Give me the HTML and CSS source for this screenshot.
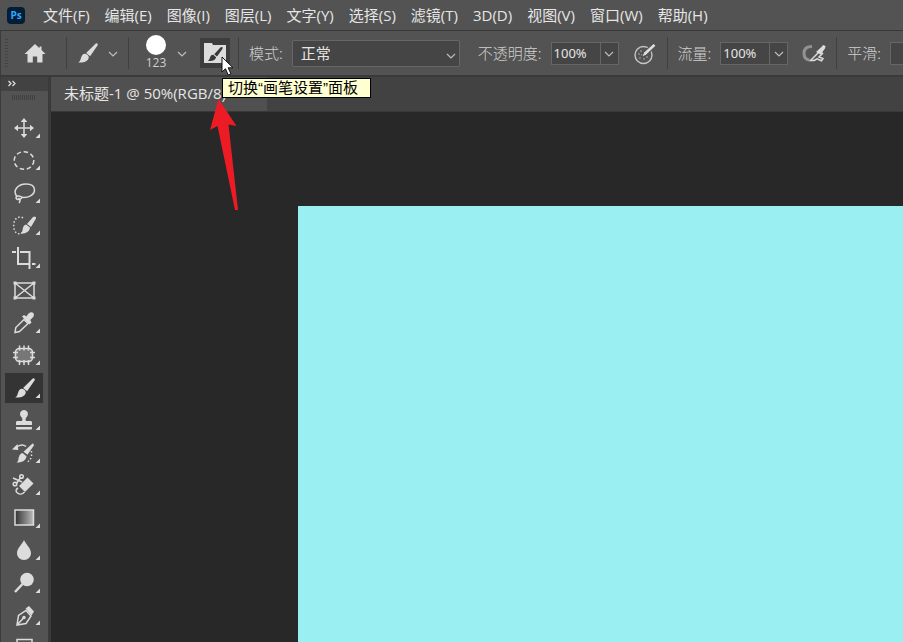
FILE: index.html
```html
<!DOCTYPE html>
<html lang="zh-CN">
<head>
  <meta charset="UTF-8">
  <meta name="viewport" content="width=device-width, initial-scale=1">
  <title>未标题-1</title>
  <link rel="stylesheet" href="styles.css">
</head>
<body>
  <!-- shared icons -->
  <svg class="icon-defs" aria-hidden="true">
    <symbol id="chevron" viewBox="0 0 14 14">
      <path d="M3 6l4 4 4-4" fill="none" stroke="#bdbdbd" stroke-width="1.200"/>
    </symbol>
    <symbol id="brush" viewBox="0 0 20 20">
      <path d="M19.200.5c.9.6.7 1.500.1 2.300l-7.200 10.400-4-3.200L17 1.200c.7-.8 1.500-1.100 2.200-.7z"/>
      <path d="M7 10.800c2.100.2 3.700 1.700 3.800 3.500-.5 4.400-5.400 5.700-10.600 5.200 2.200-1.100 2.200-2.900 3-5.200.6-2 1.900-3.600 3.800-3.500z"/>
    </symbol>
    <symbol id="corner" viewBox="0 0 38 32">
      <path d="M35 21.500v4.500h-4.500z"/>
    </symbol>
  </svg>

  <header class="menubar">
    <span class="logo">Ps</span>
    <nav class="menu">
      <a href="#">文件(F)</a>
      <a href="#">编辑(E)</a>
      <a href="#">图像(I)</a>
      <a href="#">图层(L)</a>
      <a href="#">文字(Y)</a>
      <a href="#">选择(S)</a>
      <a href="#">滤镜(T)</a>
      <a href="#">3D(D)</a>
      <a href="#">视图(V)</a>
      <a href="#">窗口(W)</a>
      <a href="#">帮助(H)</a>
    </nav>
  </header>

  <div class="options">
    <span class="grip"></span>
    <button class="home" aria-label="主页">
      <svg width="22" height="22" viewBox="0 0 22 20"><path d="M11 1L.5 11h3v8.500h5.300v-6h4.400v6h5.300V11h3L17.500 7V3.500h-2v1.700z"/></svg>
    </button>
    <span class="sep"></span>
    <button class="brush-tool" aria-label="画笔"><svg width="20" height="20"><use href="#brush"/></svg></button>
    <button class="drop" aria-label="画笔预设"><svg width="14" height="14"><use href="#chevron"/></svg></button>
    <span class="sep"></span>
    <button class="preview"><span class="dot"></span><span>123</span></button>
    <button class="drop" aria-label="画笔大小"><svg width="14" height="14"><use href="#chevron"/></svg></button>
    <div class="toggle-wrap">
      <button class="toggle" aria-label="画笔设置" aria-describedby="tip">
        <svg width="24" height="24" viewBox="0 0 24 24">
          <path d="M1 2h8l1 2h13v18H1z"/>
          <g class="dark"><path d="M19 6c1 .4.800 1.400.2 2.200l-5.200 7.200-2.800-2.200 6.200-6.700c.4-.5 1.100-.7 1.600-.5z"/><path d="M10.300 13.800l2.800 2.400c-.4 3-4 4.200-8.300 3.500 1.900-1 1.600-2.200 2.400-3.800.7-1.400 1.800-2.400 3.100-2.100z"/></g>
        </svg>
      </button>
      <span class="tooltip" id="tip" role="tooltip">切换“画笔设置”面板</span>
      <svg class="cursor" width="13" height="20" viewBox="0 0 13 20"><path d="M1 1v15l3.500-3.300L7.200 19l2.700-1.200-2.700-6H12z" fill="#fff" stroke="#111" stroke-width="1"/></svg>
    </div>
    <span class="sep"></span>
    <label class="caption" for="mode">模式:</label>
    <div class="select-box">
      <select id="mode"><option>正常</option></select>
      <svg width="14" height="14"><use href="#chevron"/></svg>
    </div>
    <label class="caption opacity" for="opacity">不透明度:</label>
    <div class="number">
      <input id="opacity" type="text" value="100%">
      <button aria-label="调整不透明度"><svg width="14" height="14"><use href="#chevron"/></svg></button>
    </div>
    <button class="pressure" aria-label="不透明度压力">
      <svg width="24" height="24" viewBox="0 0 24 24">
        <circle cx="10.500" cy="14" r="8.500" fill="none" stroke="#c4c4c4" stroke-width="1.400"/>
        <g fill="#8b8b8b"><circle cx="8" cy="10" r="1"/><circle cx="6" cy="13" r="1"/><circle cx="9" cy="14" r="1"/><circle cx="7" cy="17" r="1"/><circle cx="11" cy="18" r="1"/><circle cx="14" cy="16" r="1"/></g>
        <path d="M9 16l2-5L20.500 2.500l2.500 2.300-9.500 9z" stroke="#535353" stroke-width="1.500"/>
        <path d="M9.500 15.300l1.800-3.700L20.600 3l1.800 1.700-9.300 8.900z"/>
      </svg>
    </button>
    <span class="sep"></span>
    <label class="caption" for="flow">流量:</label>
    <div class="number">
      <input id="flow" type="text" value="100%">
      <button aria-label="调整流量"><svg width="14" height="14"><use href="#chevron"/></svg></button>
    </div>
    <button class="pressure" aria-label="喷枪">
      <svg width="24" height="24" viewBox="0 0 24 24">
        <path d="M10 5.500c-5 0-8 2.500-8 6.800s2.500 6.500 5.500 6.700" fill="none" stroke="#929292" stroke-width="3"/>
        <path d="M8.500 19.500L18 10l2.500 2.500-3.500 3.500 4 1.500-1.500 2.300-4.500-2-2.700 1.700z" fill="none" stroke="currentColor" stroke-width="1.500"/>
        <path d="M14 11l6-5.500 1-1.500 2.500 1L23 7.500l-4.500 6z"/>
      </svg>
    </button>
    <span class="sep"></span>
    <label class="caption" for="smooth">平滑:</label>
    <div class="number"><input id="smooth" type="text"></div>
  </div>

  <div class="workspace">
    <aside class="toolbar">
      <button class="expand" aria-label="展开面板">
        <svg width="10" height="8" viewBox="0 0 10 8"><path d="M1.500 1l2.500 2.500L1.500 6M5.500 1L8 3.500 5.500 6" fill="none" stroke="currentColor" stroke-width="1.300"/></svg>
      </button>
      <span class="tool-grip"></span>
      <div class="tools">
        <button aria-label="移动工具"><svg viewBox="0 0 38 32">
          <path d="M19 8v16M11 16h16" class="line"/>
          <path d="M19 6l3.300 4h-6.600zM19 26l3.300-4h-6.600zM9 16l4-3.300v6.600zM29 16l-4-3.300v6.600z"/><use href="#corner"/></svg></button>
        <button aria-label="椭圆选框工具"><svg viewBox="0 0 38 32">
          <ellipse cx="19" cy="16.500" rx="9.800" ry="8.800" class="line" stroke-dasharray="4.500 2.700"/><use href="#corner"/></svg></button>
        <button aria-label="套索工具"><svg viewBox="0 0 38 32">
          <path d="M12 19.500c-5-6 1-12.500 9-12.500 5.500 0 8.500 2.500 8.500 6 0 5-6.500 8-12.500 7.300" class="line"/>
          <path d="M17 20.500c-1.500-2-6-2-6 .2 0 2.300 5 2.300 6-.2zM13.500 21c2 1 2 3.500.5 5" class="line"/><use href="#corner"/></svg></button>
        <button aria-label="快速选择工具"><svg viewBox="0 0 38 32">
          <path d="M18 9c-3-2-7-.5-8.500 3-1.500 4-1 9 1.500 11.500 2 2 5 1.500 6.500 0" class="line" stroke-dasharray="1.500 2"/>
          <path d="M29.500 7.500c1 0 1.700.8 1.500 2l-5 8.500-4-3 6-7zM21 15.500l4 3c-.5 4.500-4.500 6.300-9.500 6 2.500-1.500 1.800-3.500 2.500-5.700.5-1.800 1.500-3 3-3.300z"/><use href="#corner"/></svg></button>
        <button aria-label="裁剪工具"><svg viewBox="0 0 38 32">
          <path d="M13 5v17h11M7 10h4M15 10h9.500v17M27 22h3.500" fill="none" stroke="currentColor" stroke-width="2"/><use href="#corner"/></svg></button>
        <button aria-label="图框工具"><svg viewBox="0 0 38 32">
          <path d="M10 9h19v15H10zM10 9l19 15M29 9L10 24" class="line"/>
          <path d="M8.500 7.500h3v3h-3zM27.500 7.500h3v3h-3zM8.500 22.500h3v3h-3zM27.500 22.500h3v3h-3z"/></svg></button>
        <button aria-label="吸管工具"><svg viewBox="0 0 38 32">
          <path d="M19 12.500l4 4-8.500 8-4.500 1 .8-5z" class="line"/>
          <path d="M17 9.500l2-1.500 2.500 1.500c1-2 2.500-4 4.500-4.200 2.200-.1 3.500 1.700 2.800 3.500-.6 1.700-2.300 3.100-3.600 4.300l1.300 2.400-2 2z"/><use href="#corner"/></svg></button>
        <button aria-label="修补工具"><svg viewBox="0 0 38 32">
          <rect x="10.500" y="9.500" width="17" height="13" rx="4" fill="#777" stroke="currentColor" stroke-width="1.600"/>
          <path d="M14.500 6.500v5M19 6.500v5M23.500 6.500v5M14.500 21v5M19 21v5M23.500 21v5M8 13.500h5M8 18.500h5M25 13.500h5M25 18.500h5" class="line"/><use href="#corner"/></svg></button>
        <button class="active" aria-label="画笔工具"><svg viewBox="0 0 38 32">
          <use href="#brush" x="10" y="6" width="20" height="20"/><use href="#corner"/></svg></button>
        <button aria-label="仿制图章工具"><svg viewBox="0 0 38 32">
          <path d="M17 17c.8-2 .4-2.700-.9-4.200C13.800 10 15.500 6 19 6s5.200 4 2.900 6.800c-1.300 1.500-1.700 2.200-.9 4.200h4.500c1 0 1.500.6 1.500 1.500V21H11v-2.500c0-.9.500-1.500 1.500-1.500zM11 23h16v1.500c0 .5-.5 1-1 1H12c-.5 0-1-.5-1-1z"/><use href="#corner"/></svg></button>
        <button aria-label="历史记录画笔工具"><svg viewBox="0 0 38 32">
          <path d="M11 10.500c4-3 7.500-3 10-1" class="line"/><path d="M7 12.500l5.500-5.500.8 6z"/>
          <path d="M27.500 6.500c1.200.2 1.700 1.100 1.200 2.200l-6.200 9-4-3zM17.500 16l4 3.200c-.6 4.700-4.800 6.300-10 6.300 2.500-1.500 1.500-3.700 2.500-5.800.6-1.900 1.800-3.500 3.500-3.700z"/>
          <path d="M26.500 14v5c-.5 3-2 4.500-4 6" class="line" stroke-dasharray="1.500 2"/><use href="#corner"/></svg></button>
        <button aria-label="橡皮擦工具"><svg viewBox="0 0 38 32">
          <path d="M22.500 8.500l6 6L20 23l-6-6z"/>
          <path d="M13 19c-2.500 1.500-2.500 3.500-.5 5s5 1.500 7-1" class="line"/>
          <path d="M8 9l9 4M16 8l-5 7" class="line"/><circle cx="16.500" cy="7.500" r="1.800" class="line"/><circle cx="10" cy="15" r="1.800" class="line"/><use href="#corner"/></svg></button>
        <button aria-label="渐变工具"><svg viewBox="0 0 38 32">
          <defs><linearGradient id="fade"><stop stop-color="#333"/><stop offset="1" stop-color="#bbb"/></linearGradient></defs>
          <rect x="10" y="8" width="18.500" height="15" fill="url(#fade)" stroke="currentColor" stroke-width="1.500"/><use href="#corner"/></svg></button>
        <button aria-label="模糊工具"><svg viewBox="0 0 38 32">
          <path d="M19 6c1.500 4 7 8 7 13 0 4-3 7-7 7s-7-3-7-7c0-5 5.500-9 7-13z"/><use href="#corner"/></svg></button>
        <button aria-label="减淡工具"><svg viewBox="0 0 38 32">
          <circle cx="22" cy="12.500" r="6.800"/><path d="M17.500 17L10 25" fill="none" stroke="currentColor" stroke-width="2.500"/><use href="#corner"/></svg></button>
        <button aria-label="钢笔工具"><svg viewBox="0 0 38 32">
          <path d="M12 26l1.500-9.500 7.500-5 5 5.500-5 7.500zM12 26l6.500-7" class="line"/><circle cx="19" cy="18.500" r="1.700"/>
          <path d="M20.500 9.500L24 7l5 5.500-2.500 4z"/><use href="#corner"/></svg></button>
        <button aria-label="文字工具"><svg viewBox="0 0 38 32">
          <path d="M12 7.500h15v16H12zM15.500 14v-3h8v3M19.500 11v9" class="line"/></svg></button>
      </div>
    </aside>
    <main class="document">
      <div class="tabs">
        <a class="tab" href="#">未标题-1 @ 50%(RGB/8)</a>
      </div>
      <div class="stage">
        <div class="artboard"></div>
      </div>
    </main>
  </div>

  <svg class="pointer" width="28" height="112" viewBox="0 0 28 112" aria-hidden="true">
    <path d="M8.500 0L0 31l7.500-4L25 111h3L18.500 25.500l8 1.500z" fill="#ed1c24"/>
  </svg>
</body>
</html>
```
FILE: styles.css
```css
* {
  box-sizing: border-box;
}
body {
  margin: 0;
  height: 100vh;
  display: flex;
  flex-direction: column;
  overflow: hidden;
  position: relative;
  background-color: #282828;
  color: #e6e6e6;
  font-family: "Open Sans", "Noto Sans CJK SC", sans-serif;
  font-size: 15px;
}
a {
  color: inherit;
  text-decoration: none;
}
button {
  display: flex;
  align-items: center;
  justify-content: center;
  padding: 0;
  border: none;
  background: none;
  color: #dcdcdc;
  font-family: inherit;
}
svg {
  display: block;
  flex: none;
  fill: currentColor;
}
.icon-defs {
  position: absolute;
  width: 0;
  height: 0;
}

/* menu */
.menubar {
  display: flex;
  flex: none;
  align-items: center;
  height: 31px;
  padding-left: 7px;
  background-color: #535353;
  border-bottom: 1px solid #383838;
}
.logo {
  width: 18px;
  height: 17px;
  margin-right: 18px;
  border-radius: 4px;
  background-color: #001e36;
  color: #31a8ff;
  font: bold 10px/17px "Open Sans", sans-serif;
  text-align: center;
}
.menu {
  display: flex;
  gap: 15px;
  line-height: 28px;
  white-space: nowrap;
}

/* options bar */
.options {
  display: flex;
  flex: none;
  align-items: center;
  height: 46px;
  background-color: #535353;
  border-left: 1px solid #3c3c3c;
  border-bottom: 2px solid #3a3a3a;
}
.options > * {
  flex: none;
}
.grip {
  width: 3px;
  height: 28px;
  margin: 0 4px;
  background: repeating-linear-gradient(#444 0 1px, #535353 1px 3px);
}
.home {
  width: 46px;
}
.sep {
  width: 1px;
  height: 32px;
  margin: 0 8px;
  background-color: #404040;
}
.brush-tool {
  width: 26px;
  margin-right: 5px;
}
.drop {
  width: 14px;
}
.preview {
  flex-direction: column;
  width: 38px;
  color: #d0d0d0;
  font-size: 12px;
  line-height: 16px;
}
.dot {
  width: 20px;
  height: 20px;
  border-radius: 50%;
  background-color: #fff;
}
.toggle-wrap {
  position: relative;
  margin-left: 11px;
}
.toggle {
  width: 30px;
  height: 30px;
  background-color: #3d3d3d;
}
.dark {
  fill: #383838;
}
.tooltip {
  position: absolute;
  z-index: 2;
  top: 40px;
  left: 22px;
  height: 20px;
  padding: 0 12px 0 5px;
  border: 1px solid #000;
  background-color: #ffffd2;
  color: #000;
  font-family: "Liberation Sans", "Noto Sans CJK SC", sans-serif;
  line-height: 17px;
  white-space: nowrap;
}
.cursor {
  position: absolute;
  z-index: 3;
  top: 18px;
  left: 21px;
}
.caption {
  margin: 0 9px 0 2px;
  color: #d0d0d0;
  font-family: "Noto Sans CJK SC", sans-serif;
  font-weight: 300;
  line-height: 20px;
  white-space: nowrap;
}
.opacity {
  margin-left: 18px;
}
.select-box {
  position: relative;
}
.select-box select {
  display: block;
  width: 168px;
  height: 27px;
  padding: 0 8px;
  appearance: none;
  border: 1px solid #666;
  border-radius: 2px;
  background-color: #454545;
  color: #e6e6e6;
  font: inherit;
}
.select-box svg {
  position: absolute;
  top: 8px;
  right: 2px;
  pointer-events: none;
}
.number {
  display: flex;
  height: 23px;
  border: 1px solid #666;
  background-color: #454545;
}
.number input {
  width: 48px;
  padding: 0 2px;
  border: none;
  background: none;
  color: #e6e6e6;
  font: 13px "Noto Sans", sans-serif;
}
.number button {
  width: 18px;
  border-left: 1px solid #666;
}
.pressure {
  width: 28px;
  margin-left: 12px;
}

/* workspace */
.workspace {
  display: flex;
  flex: 1;
  min-height: 0;
}
.toolbar {
  flex: none;
  width: 51px;
  overflow: hidden;
  background-color: #535353;
  border-left: 1px solid #3c3c3c;
  border-right: 3px solid #3a3a3a;
}
.expand {
  width: 100%;
  height: 14px;
  padding-left: 6px;
  justify-content: flex-start;
  background-color: #424242;
}
.tool-grip {
  display: block;
  width: 24px;
  height: 5px;
  margin: 4px 11px 12px;
  background: repeating-linear-gradient(90deg, #404040 0 1px, #535353 1px 2px);
}
.tools {
  padding-left: 4px;
}
.tools button {
  width: 38px;
  height: 32px;
}
.tools button:nth-child(even) {
  margin-bottom: 1px;
}
.tools svg {
  width: 38px;
  height: 32px;
}
.tools .active {
  background: linear-gradient(#343434, #343434) center / 38px 30px no-repeat;
}
.line {
  fill: none;
  stroke: currentColor;
  stroke-width: 1.5px;
}
.document {
  display: flex;
  flex: 1;
  flex-direction: column;
  min-width: 0;
}
.tabs {
  display: flex;
  flex: none;
  height: 35px;
  background-color: #424242;
  border-bottom: 1px solid #383838;
}
.tab {
  width: 216px;
  padding-left: 13px;
  background-color: #505050;
  line-height: 32px;
  white-space: nowrap;
}
.stage {
  display: flex;
  flex: 1;
  padding: 94px 0 0 247px;
}
.artboard {
  flex: 1;
  background-color: #9aeff3;
}
.pointer {
  position: absolute;
  z-index: 1;
  top: 99px;
  left: 210px;
}
```
